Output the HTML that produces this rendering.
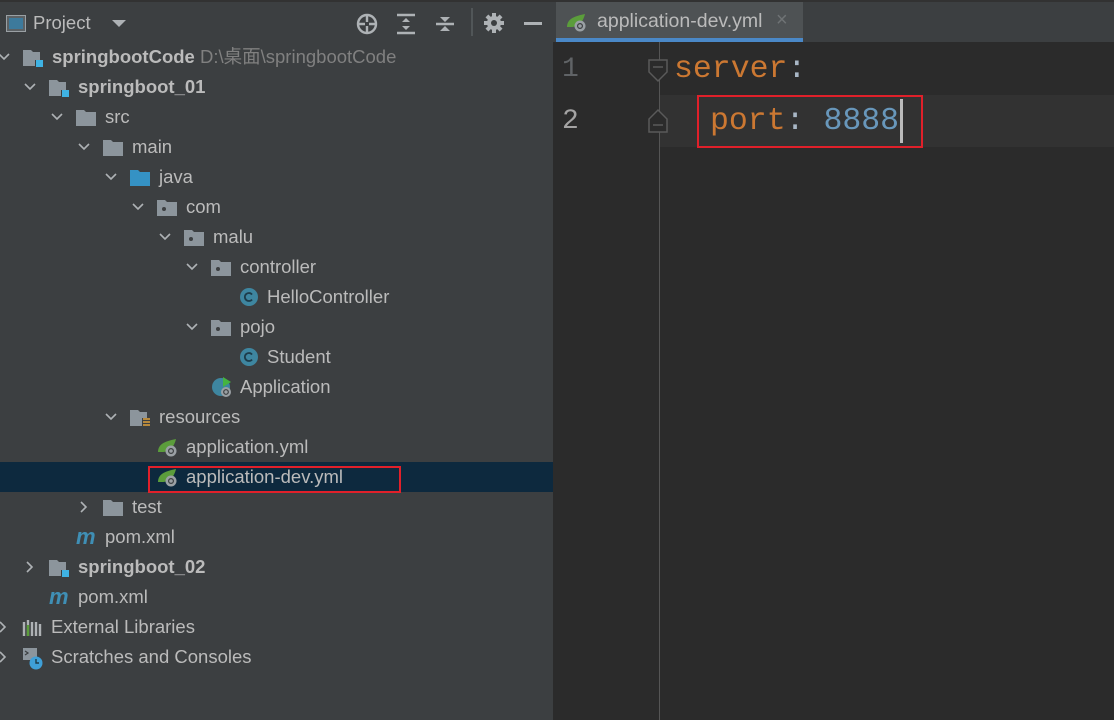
<!DOCTYPE html>
<html><head><meta charset="utf-8"><style>
body{margin:0;width:1114px;height:720px;overflow:hidden;background:#2b2b2b;font-family:"Liberation Sans","Noto Sans CJK SC",sans-serif;position:relative}
#left{position:absolute;left:0;top:0;width:553px;height:720px;background:#3c3f41}
#hdr{position:absolute;left:0;top:0;width:553px;height:42px;border-top:2px solid #323232;box-sizing:border-box}
.row{position:absolute;left:0;width:553px;height:30px;color:#bbbbbb;font-size:18.5px;line-height:30px}
.t{position:absolute;top:0;white-space:nowrap}
.ch{position:absolute;top:9px;width:12px;height:12px}
.ic{position:absolute;top:5px;width:22px;height:20px}
b{font-weight:bold}
#tabbar{position:absolute;left:553px;top:0;width:561px;height:42px;background:#3c3f41;border-top:2px solid #323232;box-sizing:border-box}
#tab{position:absolute;left:556px;top:2px;width:247px;height:40px;background:#4e5254;border-bottom:4px solid #4a88c7;box-sizing:border-box}
.mono{font-family:"Liberation Mono","DejaVu Sans Mono",monospace;font-size:31.5px;position:absolute;white-space:pre}
</style></head><body>
<div id="left">
<div id="hdr">
<svg style="position:absolute;left:6px;top:13px" width="20" height="18"><rect x="0.5" y="0.5" width="19" height="16" fill="#5c6164" stroke="#9aa0a4"/><rect x="3" y="3" width="14" height="11" fill="#3d7a9c"/></svg>
<span style="position:absolute;left:33px;top:10px;color:#bbb;font-size:18.5px">Project</span>
<svg style="position:absolute;left:112px;top:18px" width="14" height="8"><path d="M0 0h14L7 7z" fill="#aeb2b5"/></svg>
<svg style="position:absolute;left:356px;top:11px" width="22" height="22"><circle cx="11" cy="11" r="9" fill="none" stroke="#aeb2b5" stroke-width="2.4"/><path d="M11 2v7M11 13v7M2 11h7M13 11h7" stroke="#aeb2b5" stroke-width="2.4"/></svg>
<svg style="position:absolute;left:396px;top:11px" width="20" height="22"><path d="M1 2h18M1 20h18" stroke="#aeb2b5" stroke-width="2.4"/><path d="M10 5l4 4H6zM10 17l4-4H6z" fill="#aeb2b5"/></svg>
<svg style="position:absolute;left:434px;top:11px" width="22" height="22"><path d="M2 11h18" stroke="#aeb2b5" stroke-width="2.4"/><path d="M11 9l5-5H6zM11 13l5 5H6z" fill="#aeb2b5"/></svg>
<div style="position:absolute;left:471px;top:6px;width:2px;height:28px;background:#515658"></div>
<svg style="position:absolute;left:484px;top:11px" width="20" height="20"><g fill="#aeb2b5"><circle cx="10" cy="10" r="7"/><path d="M8 0h4v20H8zM0 8h20v4H0z"/><path d="M8 0h4v20H8z" transform="rotate(45 10 10)"/><path d="M8 0h4v20H8z" transform="rotate(-45 10 10)"/></g><circle cx="10" cy="10" r="3" fill="#3c3f41"/></svg>
<div style="position:absolute;left:524px;top:20px;width:18px;height:3px;background:#aeb2b5"></div>
</div>
<div class="row" style="top:462px;background:#0d293e"></div>
<div style="position:absolute;left:148px;top:466px;width:249px;height:23px;border:2px solid #e0202a;box-sizing:content-box"></div>
</div>

<svg width="0" height="0" style="position:absolute">
<defs>
<symbol id="chd" viewBox="0 0 12 12"><path d="M1 3l5 5 5-5" fill="none" stroke="#aeb2b5" stroke-width="1.6"/></symbol>
<symbol id="chr" viewBox="0 0 12 12"><path d="M3 1l5 5-5 5" fill="none" stroke="#aeb2b5" stroke-width="1.6"/></symbol>
<symbol id="fold" viewBox="0 0 22 20"><path d="M1 3h8l2 2h10v14H1z" fill="#8c959c"/></symbol>
<symbol id="mod" viewBox="0 0 22 20"><path d="M1 3h8l2 2h7v8h-5v6H1z" fill="#8c959c"/><rect x="14" y="13" width="7" height="7" fill="#3fb3e4"/></symbol>
<symbol id="src" viewBox="0 0 22 20"><path d="M1 3h8l2 2h10v14H1z" fill="#3592c4"/></symbol>
<symbol id="pkg" viewBox="0 0 22 20"><path d="M1 3h8l2 2h10v14H1z" fill="#8c959c"/><circle cx="8" cy="12" r="2" fill="#3c3f41"/></symbol>
<symbol id="res" viewBox="0 0 22 20"><path d="M1 3h8l2 2h7v6h-5v8H1z" fill="#8c959c"/><path d="M14 12h7M14 15h7M14 18h7" stroke="#e0a23a" stroke-width="1.6"/></symbol>
<symbol id="cls" viewBox="0 0 22 20"><circle cx="11" cy="10" r="9" fill="#3e86a0"/><path d="M14 7.5a4 4 0 1 0 0 5" fill="none" stroke="#1d3c4a" stroke-width="1.8"/></symbol>
<symbol id="app" viewBox="0 0 22 22"><circle cx="10" cy="11" r="9" fill="#3e86a0"/><path d="M12 1l8 5-8 5z" fill="#45b440"/><circle cx="15" cy="16" r="5" fill="#9aa0a4"/><circle cx="15" cy="16" r="2.3" fill="none" stroke="#3c3f41" stroke-width="1.2"/></symbol>
<symbol id="yml" viewBox="0 0 22 20"><path d="M1 15C1 6 10 4 19 2c-2 8-6 13-14 13z" fill="#5b9d3b"/><circle cx="14" cy="14" r="5.5" fill="#9aa0a4"/><circle cx="14" cy="14" r="2.4" fill="none" stroke="#3c3f41" stroke-width="1.2"/></symbol>
<symbol id="mvn" viewBox="0 0 22 20"><text x="0" y="17" font-family="Liberation Sans" font-weight="bold" font-style="italic" font-size="22" fill="#3f8fb5">m</text></symbol>
</defs></svg>

<div id="tree" style="position:absolute;left:0;top:0">
<div class="row" style="top:42px"><svg class="ch" style="left:-2px"><use href="#chd"/></svg><svg class="ic" style="left:22px"><use href="#mod"/></svg><span class="t" style="left:52px"><b>springbootCode</b> <span style="color:#808080">D:\桌面\springbootCode</span></span></div>
<div class="row" style="top:72px"><svg class="ch" style="left:24px"><use href="#chd"/></svg><svg class="ic" style="left:48px"><use href="#mod"/></svg><span class="t" style="left:78px"><b>springboot_01</b></span></div>
<div class="row" style="top:102px"><svg class="ch" style="left:51px"><use href="#chd"/></svg><svg class="ic" style="left:75px"><use href="#fold"/></svg><span class="t" style="left:105px">src</span></div>
<div class="row" style="top:132px"><svg class="ch" style="left:78px"><use href="#chd"/></svg><svg class="ic" style="left:102px"><use href="#fold"/></svg><span class="t" style="left:132px">main</span></div>
<div class="row" style="top:162px"><svg class="ch" style="left:105px"><use href="#chd"/></svg><svg class="ic" style="left:129px"><use href="#src"/></svg><span class="t" style="left:159px">java</span></div>
<div class="row" style="top:192px"><svg class="ch" style="left:132px"><use href="#chd"/></svg><svg class="ic" style="left:156px"><use href="#pkg"/></svg><span class="t" style="left:186px">com</span></div>
<div class="row" style="top:222px"><svg class="ch" style="left:159px"><use href="#chd"/></svg><svg class="ic" style="left:183px"><use href="#pkg"/></svg><span class="t" style="left:213px">malu</span></div>
<div class="row" style="top:252px"><svg class="ch" style="left:186px"><use href="#chd"/></svg><svg class="ic" style="left:210px"><use href="#pkg"/></svg><span class="t" style="left:240px">controller</span></div>
<div class="row" style="top:282px"><svg class="ic" style="left:238px"><use href="#cls"/></svg><span class="t" style="left:267px">HelloController</span></div>
<div class="row" style="top:312px"><svg class="ch" style="left:186px"><use href="#chd"/></svg><svg class="ic" style="left:210px"><use href="#pkg"/></svg><span class="t" style="left:240px">pojo</span></div>
<div class="row" style="top:342px"><svg class="ic" style="left:238px"><use href="#cls"/></svg><span class="t" style="left:267px">Student</span></div>
<div class="row" style="top:372px"><svg class="ic" style="left:211px;top:4px;height:22px"><use href="#app"/></svg><span class="t" style="left:240px">Application</span></div>
<div class="row" style="top:402px"><svg class="ch" style="left:105px"><use href="#chd"/></svg><svg class="ic" style="left:129px"><use href="#res"/></svg><span class="t" style="left:159px">resources</span></div>
<div class="row" style="top:432px"><svg class="ic" style="left:157px"><use href="#yml"/></svg><span class="t" style="left:186px">application.yml</span></div>
<div class="row" style="top:462px"><svg class="ic" style="left:157px"><use href="#yml"/></svg><span class="t" style="left:186px">application-dev.yml</span></div>
<div class="row" style="top:492px"><svg class="ch" style="left:78px"><use href="#chr"/></svg><svg class="ic" style="left:102px"><use href="#fold"/></svg><span class="t" style="left:132px">test</span></div>
<div class="row" style="top:522px"><svg class="ic" style="left:76px"><use href="#mvn"/></svg><span class="t" style="left:105px">pom.xml</span></div>
<div class="row" style="top:552px"><svg class="ch" style="left:24px"><use href="#chr"/></svg><svg class="ic" style="left:48px"><use href="#mod"/></svg><span class="t" style="left:78px"><b>springboot_02</b></span></div>
<div class="row" style="top:582px"><svg class="ic" style="left:49px"><use href="#mvn"/></svg><span class="t" style="left:78px">pom.xml</span></div>
<div class="row" style="top:612px"><svg class="ch" style="left:-3px"><use href="#chr"/></svg><svg class="ic" style="left:22px" viewBox="0 0 22 20"><path d="M2 5v14M6 3v16M10 5v14M14 5v14M18 7v12" stroke="#aeb2b5" stroke-width="2.4"/><path d="M6 8v11" stroke="#5b9d3b" stroke-width="2.4"/></svg><span class="t" style="left:51px">External Libraries</span></div>
<div class="row" style="top:642px"><svg class="ch" style="left:-3px"><use href="#chr"/></svg><svg class="ic" style="left:22px;height:24px" viewBox="0 0 22 24"><rect x="1" y="1" width="14" height="12" fill="#8c959c"/><path d="M3 4l3 2-3 2" stroke="#3c3f41" fill="none" stroke-width="1.2"/><circle cx="14" cy="16" r="6.5" fill="#3fa0d8"/><path d="M14 12v4h3" stroke="#1d3c4a" fill="none" stroke-width="1.4"/></svg><span class="t" style="left:51px">Scratches and Consoles</span></div>
</div>

<div id="tabbar"></div>
<div id="tab">
<svg style="position:absolute;left:10px;top:10px" width="22" height="20"><use href="#yml"/></svg>
<span style="position:absolute;left:41px;top:8px;color:#bbb;font-size:19.5px">application-dev.yml</span>
<span style="position:absolute;left:220px;top:7px;color:#6f7375;font-size:20px">×</span>
</div>
<div style="position:absolute;left:660px;top:95px;width:454px;height:52px;background:#323232"></div>
<div style="position:absolute;left:659px;top:42px;width:1px;height:678px;background:#555"></div>
<span class="mono" style="left:562px;top:54px;color:#606366;font-size:28px">1</span>
<span class="mono" style="left:562px;top:106px;color:#a4a3a3;font-size:28px">2</span>
<svg style="position:absolute;left:647px;top:58px" width="24" height="30"><path d="M2 2h18v12l-9 9-9-9z" fill="#2b2b2b" stroke="#5a5a5a" stroke-width="1.5"/><path d="M6 9h10" stroke="#5a5a5a" stroke-width="1.5"/></svg>
<svg style="position:absolute;left:647px;top:105px" width="24" height="30"><path d="M2 27h18V14l-9-9-9 9z" fill="#2b2b2b" stroke="#5a5a5a" stroke-width="1.5"/><path d="M6 20h10" stroke="#5a5a5a" stroke-width="1.5"/></svg>
<span class="mono" style="left:674px;top:52px;color:#cc7832">server<span style="color:#a9b7c6">:</span></span>
<span class="mono" style="left:710px;top:104px;color:#cc7832">port<span style="color:#a9b7c6">: </span><span style="color:#6897bb">8888</span></span>
<div style="position:absolute;left:900px;top:99px;width:3px;height:44px;background:#bbb"></div>
<div style="position:absolute;left:697px;top:95px;width:222px;height:49px;border:2px solid #e0202a"></div>
</body></html>
